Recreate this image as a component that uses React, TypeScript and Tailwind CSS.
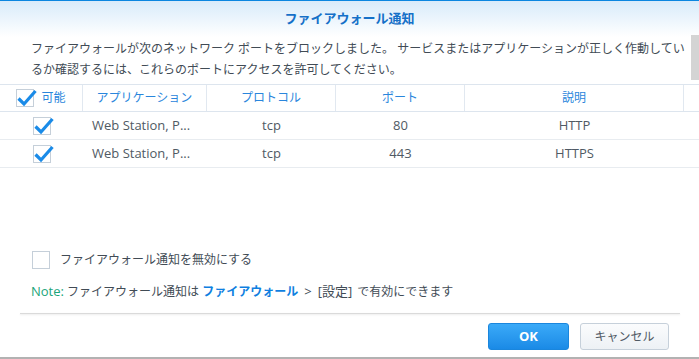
import React from "react";

const FONT = '"Open Sans", "Noto Sans CJK JP", sans-serif';

function Check({ checked }: { checked: boolean }) {
  return (
    <div className="relative w-[18px] h-[18px] shrink-0 border border-[#c5cfd9] bg-white">
      {checked && (
        <svg
          className="absolute -left-[1px] -top-[1px] overflow-visible"
          width="20"
          height="18"
          viewBox="0 0 20 18"
        >
          <path d="M2.5 9.5 L8 15 L19.5 2" stroke="#1a8be8" strokeWidth="3.2" fill="none" />
        </svg>
      )}
    </div>
  );
}

const rows = [
  { app: "Web Station, P...", proto: "tcp", port: "80", desc: "HTTP" },
  { app: "Web Station, P...", proto: "tcp", port: "443", desc: "HTTPS" },
];

export default function App() {
  return (
    <div
      className="relative w-[699px] h-[359px] overflow-hidden bg-white flex flex-col border-t border-t-[#0a86e0] border-b-2 border-b-[#b2b2b2]"
      style={{ fontFamily: FONT }}
    >
      {/* header */}
      <div className="h-[36px] shrink-0 flex items-center justify-center bg-gradient-to-b from-[#d8ebfa] to-white">
        <span className="text-[13px] font-bold text-[#1570c8]">ファイアウォール通知</span>
      </div>

      {/* description */}
      <div className="mt-[1px] pl-[31px] text-[12px] leading-[21px] text-[#414b55] whitespace-nowrap">
        <div>ファイアウォールが次のネットワーク ポートをブロックしました。 サービスまたはアプリケーションが正しく作動してい</div>
        <div>るか確認するには、これらのポートにアクセスを許可してください。</div>
      </div>

      {/* table header */}
      <div className="mt-[4px] h-[28px] flex border-t border-b border-[#dde5ee] text-[12px] text-[#2a86dc]">
        <div className="w-[83px] flex items-center justify-center gap-[7px] border-r border-[#e1e8f0]">
          <Check checked />
          <span>可能</span>
        </div>
        <div className="w-[124px] flex items-center justify-center border-r border-[#e1e8f0]">アプリケーション</div>
        <div className="w-[129px] flex items-center justify-center border-r border-[#e1e8f0]">プロトコル</div>
        <div className="w-[129px] flex items-center justify-center border-r border-[#e1e8f0]">ポート</div>
        <div className="w-[219px] flex items-center justify-center border-r border-[#e1e8f0]">説明</div>
        <div className="flex-1" />
      </div>

      {/* rows */}
      {rows.map((r, i) => (
        <div key={i} className="h-[28px] flex border-b border-[#e8ecf0] text-[13px] text-[#505a64]">
          <div className="w-[83px] flex items-center justify-center">
            <Check checked />
          </div>
          <div className="w-[124px] flex items-center pl-[9px] whitespace-nowrap">{r.app}</div>
          <div className="w-[129px] flex items-center justify-center">{r.proto}</div>
          <div className="w-[129px] flex items-center justify-center">{r.port}</div>
          <div className="w-[219px] flex items-center justify-center">{r.desc}</div>
        </div>
      ))}

      {/* disable checkbox */}
      <div className="mt-[83px] h-[18px] pl-[32px] flex items-center gap-[10px] text-[12px] text-[#414b55]">
        <Check checked={false} />
        <span>ファイアウォール通知を無効にする</span>
      </div>

      {/* note */}
      <div className="mt-[12px] pl-[31px] text-[12px] leading-[20px] text-[#414b55] whitespace-nowrap">
        <span className="text-[13px] text-[#1ba57a]">Note:</span> ファイアウォール通知は{" "}
        <span className="font-bold text-[#0f7fe0]">ファイアウォール</span>
        <span className="text-[13px] ml-[6px] mr-[6px]">&gt;</span>
        <span className="text-[13px]">[設定]</span>
        <span className="ml-[5px]">で有効にできます</span>
      </div>

      {/* separator */}
      <div className="mt-[11px] ml-[20px] w-[660px] h-[1px] bg-[#dadada] shadow-[0_1px_2px_rgba(0,0,0,0.10)]" />

      {/* buttons */}
      <div className="mt-[9px] h-[27px] flex justify-end gap-[11px] pr-[30px]">
        <button className="w-[81px] h-[27px] rounded-[3px] border border-[#1a86dd] bg-gradient-to-b from-[#3aaaf8] to-[#1a8ae6] text-white text-[13px] font-bold">
          OK
        </button>
        <button className="w-[89px] h-[27px] rounded-[3px] border border-[#c6d0da] bg-gradient-to-b from-[#fbfcfd] to-[#edf1f5] text-[#505a64] text-[12px]">
          キャンセル
        </button>
      </div>

      {/* scrollbar thumb */}
      <div className="absolute left-[691px] top-[34px] w-[8px] h-[45px] bg-[#d4d4d4]" />
    </div>
  );
}
